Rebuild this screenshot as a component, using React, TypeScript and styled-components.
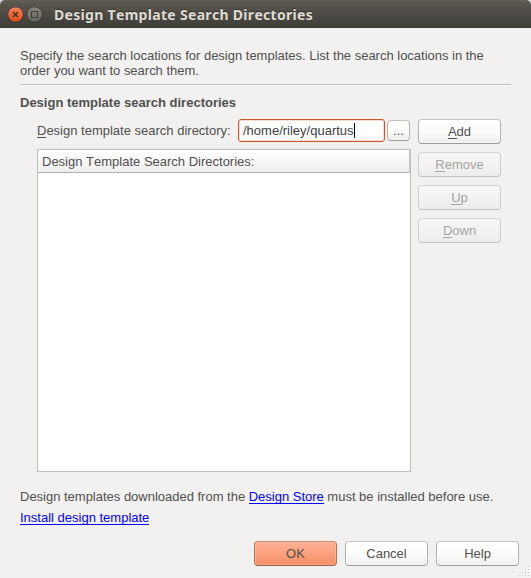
import React from "react";
import styled, { createGlobalStyle, css } from "styled-components";

const GlobalStyle = createGlobalStyle`
  * { box-sizing: border-box; }
  html, body { margin: 0; padding: 0; background: #f2f1ef; }
  body { overflow: hidden; }
`;

const Dialog = styled.div`
  position: relative;
  width: 531px;
  height: 578px;
  display: flex;
  flex-direction: column;
  background: #f2f1ef;
  color: #505050;
  font-family: "Liberation Sans", Arial, sans-serif;
  font-size: 13px;
  line-height: 15px;
  font-kerning: none;
  white-space: nowrap;
  overflow: hidden;
`;

const TitleBackdrop = styled.header`
  flex: none;
  height: 28px;
  background: #dcdcdc;
`;

const TitleBar = styled.div`
  height: 28px;
  display: flex;
  align-items: center;
  padding: 0 7px;
  border-radius: 5px 5px 0 0;
  background: linear-gradient(#57544a 0, #67645b 1px, #5a574f 2px, #3d3c37 100%);
`;

const WindowIcon = styled.svg`
  display: block;
  flex: none;
  width: 17px;
  height: 17px;
  margin-right: 2px;
`;

const Title = styled.h1`
  margin: 0 0 0 9px;
  padding-top: 2px;
  font-family: "Noto Sans", "Open Sans", sans-serif;
  font-size: 14px;
  font-weight: 700;
  line-height: 20px;
  letter-spacing: 0.31px;
  color: #dfdbd2;
  text-shadow: 0 -1px 0 #33322e;
`;

const Content = styled.main`
  flex: 1;
  display: flex;
  flex-direction: column;
  padding: 20px 20px 0;
`;

const Intro = styled.p`
  margin: 0;
  height: 36px;
  letter-spacing: -0.01px;
`;

const Divider = styled.hr`
  width: 491px;
  height: 2px;
  margin: 0;
  border: 0;
  border-top: 1px solid #bfbdba;
  border-bottom: 1px solid #fff;
`;

const SectionTitle = styled.h2`
  margin: 9px 0 0;
  font-size: 13px;
  font-weight: 700;
  line-height: 15px;
`;

const Section = styled.section`
  display: flex;
  align-items: flex-start;
  gap: 7px;
  margin: 9px 0 0 17px;
`;

const Left = styled.div`
  width: 374px;
`;

const FieldRow = styled.div`
  display: flex;
  align-items: center;
  height: 23px;
`;

const FieldLabel = styled.label`
  width: 201px;
`;

const underline = css`
  position: relative;
  &::after {
    content: "";
    position: absolute;
    left: 0;
    right: 0;
    bottom: 0;
    height: 1px;
    background: currentColor;
  }
`;

const Mnemonic = styled.span`
  ${underline}
`;

const PathField = styled.div`
  display: flex;
  align-items: center;
  width: 147px;
  height: 23px;
  margin-right: 2px;
  padding-left: 4px;
  border: 1px solid #cf5429;
  border-radius: 3px;
  background: #fff;
  box-shadow: inset 0 0 0 1px #f8ddd2;
  color: #404040;
`;

const Caret = styled.span`
  width: 1px;
  height: 15px;
  background: #000;
`;

const Button = styled.button<{ $tone?: "primary" | "small" }>`
  display: flex;
  flex: none;
  align-items: center;
  justify-content: center;
  width: 83px;
  height: 25px;
  padding: 0;
  border: 1px solid;
  border-color: #c5c3c0 #b3b1ae #9c9a97;
  border-radius: 4px;
  background: linear-gradient(#fff, #fcfcfb 50%, #efeeec);
  box-shadow: inset 0 0 0 1px rgba(255, 255, 255, 0.5);
  font: inherit;
  color: #505050;
  &:disabled {
    border-color: #d6d4d1 #cfcdca #c3c1be;
    background: linear-gradient(#f8f7f6, #eeedeb);
    box-shadow: none;
    color: #a6a4a1;
  }
  ${(p) =>
    p.$tone === "primary" &&
    css`
      border-color: #c08973 #ac725c #94604c;
      background: linear-gradient(#ffaf93, #fca27f 45%, #f48f68);
      box-shadow: inset 0 0 0 1px rgba(255, 205, 180, 0.4);
    `}
  ${(p) =>
    p.$tone === "small" &&
    css`
      width: 23px;
      height: 21px;
    `}
`;

const DirectoryList = styled.div`
  height: 323px;
  margin-top: 7px;
  border: 1px solid #bfbdb7;
  background: #fff;
`;

const ListHeader = styled.div`
  height: 23px;
  padding: 4px 4px 0;
  border-bottom: 1px solid #b2b0ab;
  border-right: 1px solid #cbc9c5;
  background: linear-gradient(#fff, #efeeec);
`;

const Actions = styled.div`
  display: flex;
  flex-direction: column;
  gap: 8px;
`;

const Note = styled.p`
  margin: 17px 0 0;
  letter-spacing: -0.01px;
`;

const InstallLine = styled.p`
  margin: 6px 0 0;
`;

const Link = styled.a`
  color: #0000ff;
  ${underline}
`;

const Footer = styled.footer`
  display: flex;
  gap: 8px;
  margin: 16px 0 0 234px;
`;

const Grip = styled.svg`
  position: absolute;
  right: 0;
  bottom: 0;
  width: 14px;
  height: 13px;
`;

const gripDots = [0, 1, 2, 3].flatMap((row) =>
  Array.from({ length: row + 1 }, (_, i) => ({ x: 11 - i * 3, y: 1 + row * 3 })),
);

const actions = [
  { key: "A", rest: "dd", disabled: false },
  { key: "R", rest: "emove", disabled: true },
  { key: "U", rest: "p", disabled: true },
  { key: "D", rest: "own", disabled: true },
];

export default function App() {
  return (
    <Dialog>
      <GlobalStyle />
      <TitleBackdrop>
        <TitleBar>
          <WindowIcon viewBox="0 0 17 17">
            <defs>
              <linearGradient id="close" x2="0" y2="1">
                <stop stopColor="#f7825b" />
                <stop offset="1" stopColor="#df4a16" />
              </linearGradient>
            </defs>
            <circle cx="8.5" cy="8.8" r="8" fill="#37362f" />
            <circle cx="8.5" cy="8.5" r="7.3" fill="url(#close)" />
            <path d="M6 6l5 5M11 6l-5 5" stroke="#44301f" strokeWidth="1.4" />
          </WindowIcon>
          <WindowIcon viewBox="0 0 17 17">
            <defs>
              <linearGradient id="maximize" x2="0" y2="1">
                <stop stopColor="#8a877e" />
                <stop offset="1" stopColor="#66645c" />
              </linearGradient>
            </defs>
            <circle cx="8.5" cy="8.8" r="8" fill="#37362f" />
            <circle cx="8.5" cy="8.5" r="7.3" fill="url(#maximize)" />
            <rect x="5.5" y="5.5" width="6" height="6" fill="none" stroke="#3c3b37" />
          </WindowIcon>
          <Title>Design Template Search Directories</Title>
        </TitleBar>
      </TitleBackdrop>
      <Content>
        <Intro>
          Specify the search locations for design templates. List the search locations in the
          <br />
          order you want to search them.
        </Intro>
        <Divider />
        <SectionTitle>Design template search directories</SectionTitle>
        <Section>
          <Left>
            <FieldRow>
              <FieldLabel>
                <Mnemonic>D</Mnemonic>esign template search directory:
              </FieldLabel>
              <PathField>
                /home/riley/quartus
                <Caret />
              </PathField>
              <Button $tone="small">...</Button>
            </FieldRow>
            <DirectoryList>
              <ListHeader>Design Template Search Directories:</ListHeader>
            </DirectoryList>
          </Left>
          <Actions>
            {actions.map((a) => (
              <Button key={a.key} disabled={a.disabled}>
                <Mnemonic>{a.key}</Mnemonic>
                {a.rest}
              </Button>
            ))}
          </Actions>
        </Section>
        <Note>
          Design templates downloaded from the <Link>Design Store</Link> must be installed before use.
        </Note>
        <InstallLine>
          <Link>Install design template</Link>
        </InstallLine>
        <Footer>
          <Button $tone="primary">OK</Button>
          <Button>Cancel</Button>
          <Button>Help</Button>
        </Footer>
      </Content>
      <Grip viewBox="0 0 14 13">
        {gripDots.map((d) => (
          <g key={`${d.x}-${d.y}`}>
            <rect x={d.x + 1} y={d.y + 1} width="1" height="1" fill="#fff" />
            <rect x={d.x} y={d.y} width="1" height="1" fill="#cccac6" />
          </g>
        ))}
      </Grip>
    </Dialog>
  );
}
